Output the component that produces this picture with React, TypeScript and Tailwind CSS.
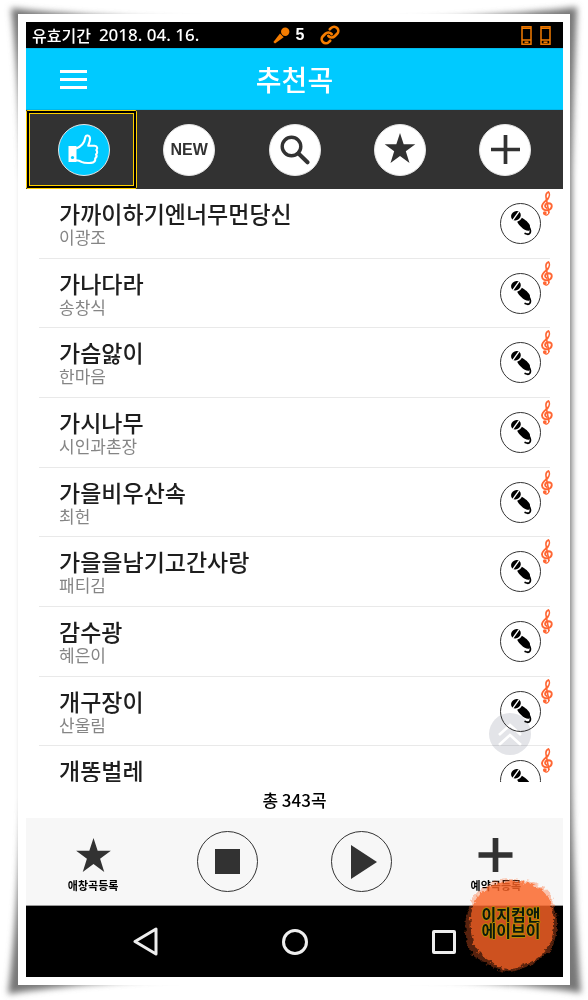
import { useState } from "react";
import clsx from "clsx";

const songs = [
  { title: "가까이하기엔너무먼당신", artist: "이광조" },
  { title: "가나다라", artist: "송창식" },
  { title: "가슴앓이", artist: "한마음" },
  { title: "가시나무", artist: "시인과촌장" },
  { title: "가을비우산속", artist: "최헌" },
  { title: "가을을남기고간사랑", artist: "패티김" },
  { title: "감수광", artist: "혜은이" },
  { title: "개구장이", artist: "산울림" },
  { title: "개똥벌레", artist: "" },
];

const STAR = "M50 0 L62 37 L100 37 L69 60 L81 98 L50 75 L19 98 L31 60 L0 37 L38 37 Z";

function StarIcon({ className }: { className?: string }) {
  return (
    <svg viewBox="0 0 100 98" className={className} fill="#323232" aria-hidden="true">
      <path d={STAR} />
    </svg>
  );
}

function PlusIcon({ className, thickness }: { className?: string; thickness: number }) {
  return (
    <svg viewBox="0 0 36 36" className={className} stroke="#323232" strokeWidth={thickness} aria-hidden="true">
      <path d="M18 0V36M0 18H36" />
    </svg>
  );
}

function ThumbIcon() {
  return (
    <svg viewBox="0 0 31 31" className="h-[31px] w-[31px]" fill="none" aria-hidden="true">
      <path d="M0.5 12H8.5V28H0.5Z" fill="#fff" />
      <circle cx="4.5" cy="23.5" r="1.6" fill="#00caff" />
      <path
        d="M8 14.5C13.5 12.5 16.5 8.5 17.3 3.5C17.7 0.6 21.8 0.8 22 4.5C22.1 7.5 20.8 9.5 20.2 11.7H26.5C29.6 11.8 29.8 15 28.3 16C29.6 17.5 29.3 19.4 28 20.3C28.9 21.8 28.4 23.5 27.2 24.3C27.6 27 26 28.7 23 28.9C18 29.4 15.5 28.9 13.5 27.8C12.2 27 11.2 26.5 8 26.3"
        stroke="#fff"
        strokeWidth="2.1"
        strokeLinejoin="round"
      />
    </svg>
  );
}

function SearchIcon() {
  return (
    <svg viewBox="0 0 30 30" className="h-[30px] w-[30px]" fill="none" stroke="#323232" aria-hidden="true">
      <circle cx="11.5" cy="11.5" r="9.3" strokeWidth="3.4" />
      <path d="M18.5 18.5L27.5 27.3" strokeWidth="4" strokeLinecap="round" />
    </svg>
  );
}

function MicIcon() {
  return (
    <svg viewBox="0 0 40 40" className="h-10 w-10" fill="#000" aria-hidden="true">
      <ellipse cx="15.3" cy="12.6" rx="5.3" ry="4.6" transform="rotate(-42 15.3 12.6)" />
      <path d="M12 17.4L18.4 8.4" stroke="#fff" strokeWidth="1.4" />
      <path d="M16.6 18.6C18.6 18 20.6 16.4 21.4 14.6C24.5 16.4 28.6 19.4 29.6 22.4C30 24.6 29.6 27 28.8 28C26.4 28.4 23.2 26.8 21 24.4C19.2 22.6 17.5 20.8 16.6 18.6Z" />
      <path d="M29 24.5C31.6 29.6 29.6 33 24.8 30.8" fill="none" stroke="#000" strokeWidth="1.8" strokeLinecap="round" />
    </svg>
  );
}

function ClefIcon() {
  return (
    <svg viewBox="0 0 12 25" className="h-[25px] w-3" fill="none" stroke="#ff6633" strokeLinecap="round" aria-hidden="true">
      <path d="M7.9 21.5L5.2 7.2C4.5 4 5.5 1.6 7.4 0.9C9 2.6 8.6 5.8 6.4 8.2" strokeWidth="1.6" />
      <path d="M6.6 8C3.8 10.7 0.9 12.4 1 15.5C1.2 18.4 4 19.7 7 19.1C11.5 18.4 12.2 12.2 7.6 12.2C3.6 12.3 3.3 16 5.6 17" strokeWidth="1.9" />
      <path d="M7.9 21.2C7.9 24.3 4.7 24.8 3.5 23.2" strokeWidth="1.3" />
      <circle cx="3.8" cy="22.1" r="1.9" fill="#ff6633" stroke="none" />
    </svg>
  );
}

function PhoneIcon() {
  return (
    <svg viewBox="0 0 11 19" className="h-[19px] w-[11px]" fill="none" stroke="#f57c00" aria-hidden="true">
      <rect x="1" y="0.8" width="9" height="17.4" strokeWidth="1.5" />
      <path d="M1 2.2H10M1 14H10" strokeWidth="1.4" />
      <path d="M3.5 16.2H7.5" strokeWidth="1.6" />
    </svg>
  );
}

// paper with lifted corners
function PaperShadow() {
  return (
    <svg viewBox="0 0 588 1000" preserveAspectRatio="none" className="absolute inset-0 h-full w-full" aria-hidden="true">
      <defs>
        <filter id="soft" x="-5%" y="-5%" width="110%" height="110%">
          <feGaussianBlur stdDeviation="3" />
        </filter>
      </defs>
      <path
        d="M11 8C60 14 140 18 210 22H380C450 18 530 13 577 7C575 60 573 110 572 180V780C573 860 577 940 581 993C530 985 450 979 380 976H210C140 979 60 986 8 994C16 930 19 870 22 800V180C20 110 17 60 11 8Z"
        fill="#777"
        filter="url(#soft)"
      />
    </svg>
  );
}

function Stamp() {
  return (
    <div className="absolute right-8 bottom-[28px] flex h-[92px] w-[90px] flex-col items-center justify-center">
      <svg viewBox="3 3 84 86" className="absolute inset-0 h-full w-full overflow-visible" aria-hidden="true">
        <defs>
          <filter id="rough" x="-10%" y="-10%" width="120%" height="120%">
            <feTurbulence type="fractalNoise" baseFrequency="0.25" numOctaves="3" seed="4" />
            <feDisplacementMap in="SourceGraphic" scale="6" xChannelSelector="R" yChannelSelector="G" />
          </filter>
        </defs>
        <g filter="url(#rough)" fill="#fb6424">
          <path
            opacity="0.35"
            d="M12 17C22 5 38 0 54 3C68 5 83 10 84 24C90 38 89 53 84 65C77 76 66 83 54 86C41 93 31 87 21 80C7 76 3 65 3 54C1 40 4 28 12 17Z"
          />
          <path
            opacity="0.72"
            d="M14 18C24 7 38 3 52 4C66 6 80 12 82 25C87 39 86 51 81 63C75 74 65 80 53 84C42 89 32 84 25 78C14 72 9 64 8 54C6 40 8 28 14 18Z"
          />
        </g>
      </svg>
      <p className="relative pb-2 text-center text-[16px] leading-4 font-bold text-[#0c1a0c] [text-shadow:1px_0_#b88a00,-1px_0_#b88a00,0_1px_#b88a00,0_-1px_#b88a00]">
        이지컴앤
        <br />
        에이브이
      </p>
    </div>
  );
}

const tabs = [
  { id: "recommend", label: "추천곡", icon: <ThumbIcon /> },
  { id: "new", label: "NEW", icon: <span className="font-['Liberation_Sans'] text-[16px] font-bold text-[#323232]">NEW</span> },
  { id: "search", label: "검색", icon: <SearchIcon /> },
  { id: "favorite", label: "애창곡", icon: <StarIcon className="mb-1 h-[30px] w-[32px]" /> },
  { id: "add", label: "예약곡", icon: <PlusIcon className="h-[29px] w-[29px]" thickness={4.6} /> },
];

export default function App() {
  const [active, setActive] = useState("recommend");

  return (
    <div className="relative h-screen bg-white px-[18px] pt-[14px] pb-[15px] font-['Noto_Sans_CJK_KR',sans-serif]">
      <PaperShadow />
      <div className="relative flex h-full flex-col bg-white p-2 pr-[7px]">
        <div className="grid h-[26px] shrink-0 grid-cols-[8fr_auto_7fr] items-center bg-black pr-3 pl-[6px] text-white">
          <div className="flex items-center gap-2 font-medium whitespace-nowrap">
            <span className="text-[16px]">유효기간</span>
            <span className="font-['Noto_Sans'] text-[17px]">2018. 04. 16.</span>
          </div>
          <div className="flex items-center">
            <svg viewBox="0 0 17 17" className="h-[17px] w-[17px]" fill="#f57c00" aria-hidden="true">
              <circle cx="12.2" cy="4.8" r="4.2" />
              <path d="M7 6.5L10.7 10.3L2 16.6L0.4 15Z" />
            </svg>
            <span className="pl-1.5 font-['Liberation_Sans'] text-[16px] font-bold">5</span>
            <svg viewBox="0 0 24 24" className="ml-4 h-5 w-5" fill="none" stroke="#f57c00" strokeWidth="3.2" strokeLinecap="round" aria-hidden="true">
              <path d="M10 13a5 5 0 0 0 7.54.54l3-3a5 5 0 0 0-7.07-7.07l-1.72 1.71" />
              <path d="M14 11a5 5 0 0 0-7.54-.54l-3 3a5 5 0 0 0 7.07 7.07l1.71-1.71" />
            </svg>
          </div>
          <div className="flex justify-end gap-2">
            <PhoneIcon />
            <PhoneIcon />
          </div>
        </div>

        <header className="grid h-[62px] shrink-0 grid-cols-[1fr_auto_1fr] items-center border-y border-[#00b8ea] bg-[#00caff] px-[34px] text-white">
          <button aria-label="메뉴" className="flex w-[27px] flex-col gap-[5px]">
            <span className="h-[3px] bg-white" />
            <span className="h-[3px] bg-white" />
            <span className="h-[3px] bg-white" />
          </button>
          <h1 className="text-[28px] font-medium">추천곡</h1>
        </header>

        <nav className="flex h-[79px] shrink-0 bg-[#323232] px-[5px]">
          {tabs.map((tab) => (
            <button
              key={tab.id}
              aria-label={tab.label}
              onClick={() => setActive(tab.id)}
              className="relative flex flex-1 items-center justify-center"
            >
              <span
                className={clsx(
                  "flex h-[52px] w-[52px] items-center justify-center rounded-full border border-[#e6e6e6]",
                  active === tab.id ? "bg-[#00caff]" : "bg-white"
                )}
              >
                {tab.icon}
              </span>
              {active === tab.id && (
                <span className="absolute inset-y-0 -right-px -left-[5px] rounded-xs border border-[#fdd000]">
                  <span className="block h-full border-2 border-black">
                    <span className="block h-full border border-[#fdd000]" />
                  </span>
                </span>
              )}
            </button>
          ))}
        </nav>

        <main className="relative min-h-0 flex-1">
          <div className="h-full overflow-y-auto [scrollbar-width:none]">
            <ul className="flex h-[627px] flex-col px-[13px]">
              {songs.map((song) => (
                <li key={song.title} className="relative flex flex-1 items-center justify-between border-b border-[#e9e9e9] pr-[9px] pl-5">
                  <div className="h-full pt-[10px]">
                    <p className="text-[23px] leading-[28px] font-medium text-[#1e1e1e]">{song.title}</p>
                    <p className="text-[17px] leading-5 text-[#858585]">{song.artist}</p>
                  </div>
                  <button
                    aria-label={`${song.title} 예약`}
                    className="flex h-[41px] w-[41px] items-center justify-center rounded-full border border-[#333]"
                  >
                    <MicIcon />
                  </button>
                  <span className="absolute top-[2px] -right-[3px]">
                    <ClefIcon />
                  </span>
                </li>
              ))}
            </ul>
          </div>
          <button
            aria-label="맨 위로"
            className="absolute right-8 bottom-[27px] flex h-[42px] w-[42px] items-center justify-center rounded-full bg-[#e3e4e8] mix-blend-multiply"
          >
            <svg viewBox="0 0 24 24" className="h-6 w-6" fill="none" stroke="#fff" strokeWidth="2.6" aria-hidden="true">
              <path d="M1 13L12 3L23 13M1 23L12 13L23 23" />
            </svg>
          </button>
        </main>

        <p className="flex h-9 shrink-0 items-center justify-center text-[17px] font-medium text-black">총 343곡</p>

        <div className="grid h-[88px] shrink-0 grid-cols-4 border-b border-[#999] bg-[#f7f7f7]">
          <button className="flex flex-col items-center pt-5">
            <StarIcon className="h-[34px] w-[35px]" />
            <span className="pt-1 text-[11px] leading-[18px] font-bold text-black">애창곡등록</span>
          </button>
          <button aria-label="정지" className="flex items-center justify-center">
            <span className="flex h-[61px] w-[61px] items-center justify-center rounded-full border border-[#333]">
              <span className="h-[25px] w-[25px] bg-[#323232]" />
            </span>
          </button>
          <button aria-label="재생" className="flex items-center justify-center">
            <span className="flex h-[61px] w-[61px] items-center justify-center rounded-full border border-[#333] pl-1">
              <svg viewBox="0 0 26 34" className="h-[34px] w-[26px]" fill="#323232" aria-hidden="true">
                <path d="M0 0L26 17L0 34Z" />
              </svg>
            </span>
          </button>
          <button className="flex flex-col items-center pt-5">
            <PlusIcon className="h-[34px] w-[35px]" thickness={6} />
            <span className="pt-1 text-[11px] leading-[18px] font-bold text-black">예약곡등록</span>
          </button>
        </div>

        <div className="grid h-[71px] shrink-0 grid-cols-3 bg-black px-[45px]">
          <button aria-label="뒤로" className="flex items-center justify-center">
            <svg viewBox="0 0 25 29" className="h-[29px] w-[25px]" fill="none" stroke="#eee" strokeWidth="3" strokeLinejoin="round" aria-hidden="true">
              <path d="M23 2V27L2 14.5Z" />
            </svg>
          </button>
          <button aria-label="홈" className="flex items-center justify-center">
            <span className="h-[26px] w-[26px] rounded-full border-[3px] border-[#eee]" />
          </button>
          <button aria-label="최근 앱" className="flex items-center justify-center">
            <span className="h-6 w-6 rounded-xs border-[3px] border-[#eee]" />
          </button>
        </div>
      </div>
      <Stamp />
    </div>
  );
}
